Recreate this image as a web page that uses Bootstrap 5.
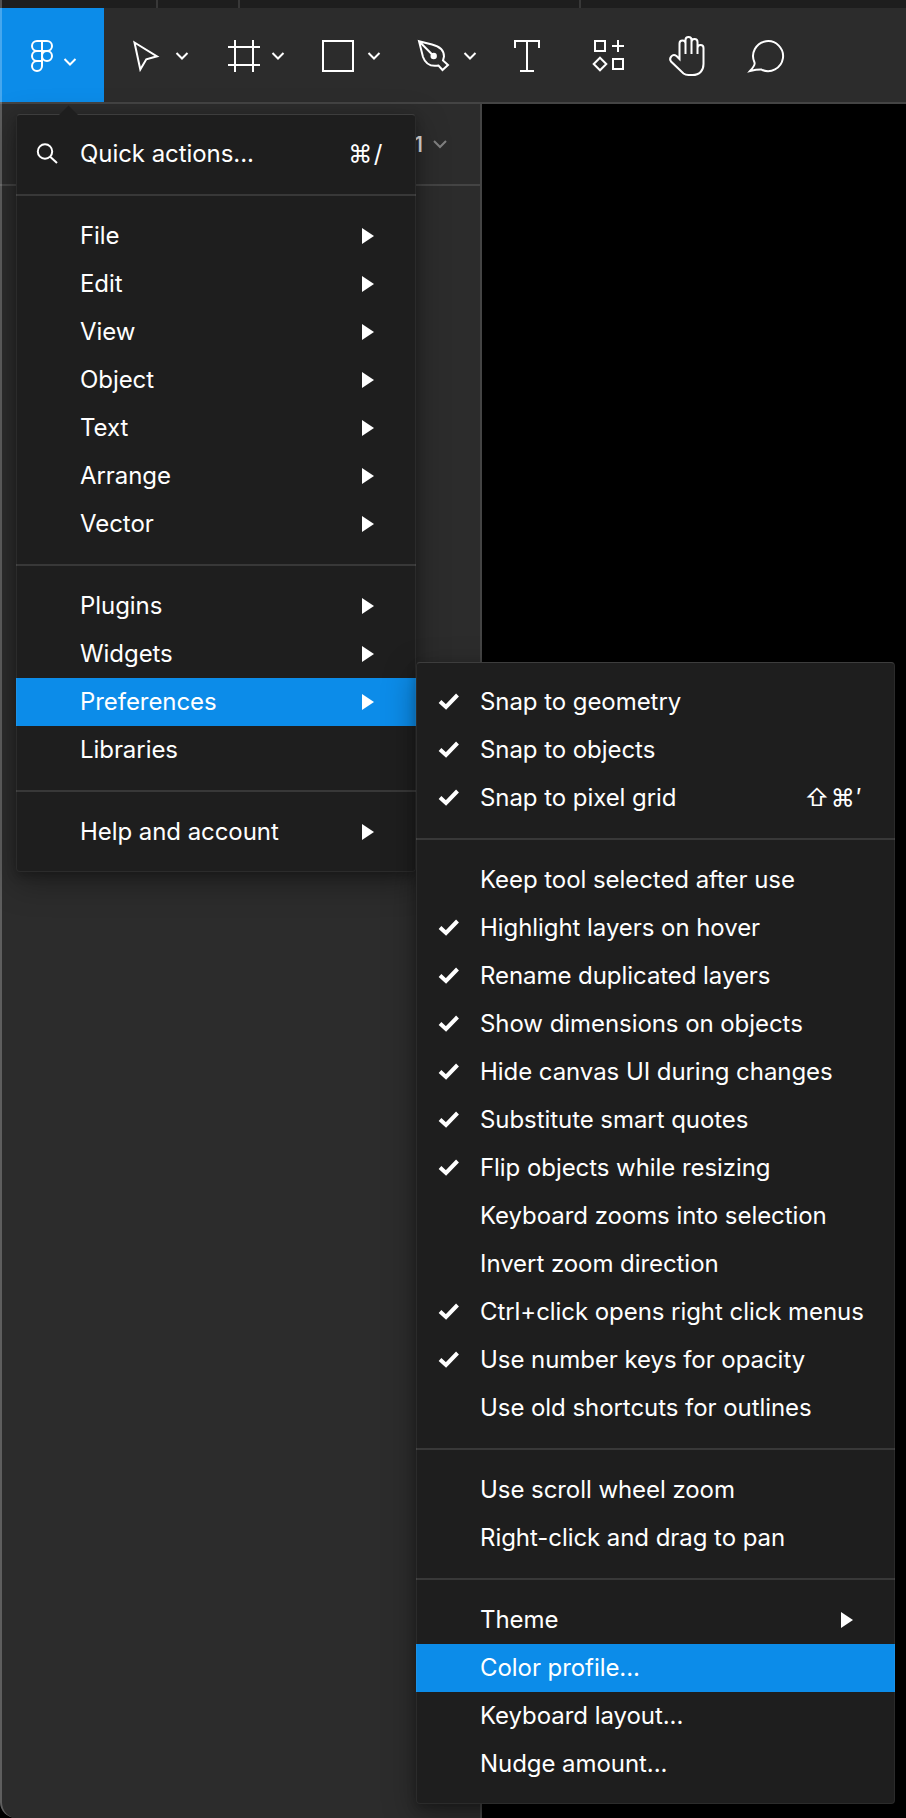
<!DOCTYPE html>
<html lang="en">
<head>
<meta charset="utf-8">
<title>Editor preferences</title>
<link href="https://cdn.jsdelivr.net/npm/bootstrap@5.3.0/dist/css/bootstrap.min.css" rel="stylesheet">
<script src="https://cdn.jsdelivr.net/npm/bootstrap@5.3.0/dist/js/bootstrap.bundle.min.js"></script>
<style>
body { background:#000; color:#fff; font-family:Inter,"Liberation Sans",sans-serif; font-size:24px; font-weight:400; letter-spacing:-.06px; line-height:1.5; }
.app { width:906px; height:1818px; }
.tabstrip { height:8px; background:#1e1e1e; }
.tabstrip span { border-right:2px solid #383838; }
.tab-a { width:158px; } .tab-b { width:82px; } .tab-c { width:341px; }
.toolbar { height:96px; background:#2c2c2c; border-bottom:2px solid #444; }
.toolbar svg, .ico { fill:none; stroke:#fff; stroke-width:2; display:block; flex:none; }
.main-btn { background:#0c8ce9; }
.side { width:482px; background:#2c2c2c; border-right:2px solid #444; border-bottom-left-radius:16px; }
.pages { height:82px; border-bottom:2px solid #444; padding-right:33px; }
.page-no { font-size:22px; font-weight:500; color:#e4e4e4; margin-right:10px; }
.edge { left:0; top:0; width:60px; height:1818px; border-left:2px solid rgba(255,255,255,.24); border-bottom-left-radius:16px; z-index:1; pointer-events:none; }
.panel { background:#1e1e1e; border-radius:4px; padding:16px 0; box-shadow:0 4px 10px rgba(0,0,0,.22),0 10px 32px rgba(0,0,0,.35); z-index:3; }
.panel::after { content:""; position:absolute; inset:0; border:1px solid rgba(255,255,255,.06); border-top-color:rgba(255,255,255,.14); border-radius:4px; pointer-events:none; }
.panel-main { left:16px; top:114px; width:400px; }
.panel-sub { left:416px; top:662px; width:479px; z-index:4; }
.notch { left:58px; top:105px; z-index:5; }
.item { height:48px; padding-right:32px; white-space:nowrap; }
.item.on { background:#0c8ce9; }
.slot { width:64px; flex:none; padding-bottom:2px; }
.lbl, .keys { line-height:47px; padding-bottom:1px; }
.keys { letter-spacing:1.5px; }
.ico-check { margin-left:22px; stroke-width:4; }
.ico-search { margin-left:20px; margin-top:2px; }
.rule { height:2px; margin:16px 0; background:#383838; }
.arrow { width:12px; height:16px; background:#fff; clip-path:polygon(0 0,100% 50%,0 100%); margin-right:10px; }
</style>
</head>
<body>
<div class="app position-relative d-flex flex-column overflow-hidden">
  <div class="tabstrip d-flex flex-shrink-0"><span class="tab-a"></span><span class="tab-b"></span><span class="tab-c"></span></div>
  <nav class="toolbar d-flex flex-shrink-0">
    <svg class="main-btn" width="104" height="94" viewBox="0 8 104 94"><path d="M42 41h-5a5 5 0 0 0 0 10h5zM42 41h5a5 5 0 0 1 0 10h-5M42 51h-5a5 5 0 0 0 0 10h5zM42 61h-5a5 5 0 1 0 5 5z"/><circle cx="47" cy="56" r="5"/><path d="M64.500 59l5.500 5.500 5.500-5.500"/></svg>
    <svg width="96" height="94" viewBox="104 8 96 94"><path d="M134.500 42.500L157 56.300 146.300 59.300 140.300 69.500zM176.500 53l5.500 5.500 5.500-5.500"/></svg>
    <svg width="96" height="94" viewBox="200 8 96 94"><path d="M235 40v32M253 40v32M228 47h32M228 65h32M272.500 53l5.500 5.500 5.500-5.500"/></svg>
    <svg width="96" height="94" viewBox="296 8 96 94"><path d="M323 41h30v30h-30zM368.500 53l5.500 5.500 5.500-5.500"/></svg>
    <svg width="96" height="94" viewBox="392 8 96 94"><path d="M419 41.200L432 44.500C440 46.500 444 51 444 56.500L443 60.500 448 65 442.500 70 438.500 65.500C430 67 425.500 64 423 57ZM419 41.200l14.700 14.800M464.500 53l5.500 5.500 5.500-5.500"/><circle cx="433.700" cy="56" r="2.200" fill="#fff"/></svg>
    <svg width="80" height="94" viewBox="488 8 80 94"><path d="M515 48v-7h24v7M527 41v30M520 71h14"/></svg>
    <svg width="80" height="94" viewBox="568 8 80 94"><path d="M595 41h10v10h-10zM618 40v12M612 46h12M613 59h10v10h-10zM600 57.700l6.300 6.300-6.300 6.300-6.300-6.300z"/></svg>
    <svg width="80" height="94" viewBox="648 8 80 94"><path d="M685.500 54V43.500a3 3 0 0 0-6 0V59l-3-3c-4-3-8 2-5.500 5.500l12.500 12q2 1.500 5 1.500h4c7 0 11-4.500 11-11V48a3 3 0 0 0-6 0v6M685.500 44v-4a3 3 0 0 1 6 0v14M691.500 42a3 3 0 0 1 6 0v12"/></svg>
    <svg width="80" height="94" viewBox="728 8 80 94"><path d="M754.500 62.500A15 15 0 1 1 761.500 69.600Q757 69.500 750 71 755.500 65 754.500 62.500z"/></svg>
  </nav>
  <div class="side flex-grow-1">
    <div class="pages d-flex align-items-center justify-content-end">
      <span class="page-no">1</span>
      <svg class="ico" width="14" height="10" viewBox="433 140 14 10" opacity=".4"><path d="M434 142l6 6 6-6"/></svg>
    </div>
  </div>
  <div class="edge position-absolute"></div>

  <svg class="notch position-absolute" width="22" height="11" viewBox="0 0 22 11"><path d="M0 11L10.500 .5 21 11z" fill="#1e1e1e"/></svg>
  <div class="panel panel-main position-absolute" id="mainMenu"></div>
  <div class="panel panel-sub position-absolute" id="subMenu"></div>
</div>
<script>
const check = '<svg class="ico ico-check" width="22" height="18" viewBox="438 692 22 18"><path d="M440 701.500l6 5.500 11.500-12"/></svg>';
const search = '<svg class="ico ico-search" width="24" height="24" viewBox="36 142 24 24"><circle cx="45" cy="151.500" r="7.200"/><path d="M50.200 156.700l6.800 6.300"/></svg>';
const more = '<span class="arrow d-block ms-auto"></span>';
const keys = t => `<span class="keys ms-auto">${t}</span>`;
// Each entry: [label, leading icon, trailing content, highlighted]; null draws a divider.
const main = [['Quick actions...', search, keys('⌘/')], null,
  ...['File','Edit','View','Object','Text','Arrange','Vector'].map(t => [t, '', more]), null,
  ['Plugins','',more], ['Widgets','',more], ['Preferences','',more,1], ['Libraries'], null,
  ['Help and account','',more]];
const sub = [['Snap to geometry',check], ['Snap to objects',check], ['Snap to pixel grid',check,keys('⇧⌘′')], null,
  ['Keep tool selected after use'], ['Highlight layers on hover',check], ['Rename duplicated layers',check],
  ['Show dimensions on objects',check], ['Hide canvas UI during changes',check], ['Substitute smart quotes',check],
  ['Flip objects while resizing',check], ['Keyboard zooms into selection'], ['Invert zoom direction'],
  ['Ctrl+click opens right click menus',check], ['Use number keys for opacity',check], ['Use old shortcuts for outlines'], null,
  ['Use scroll wheel zoom'], ['Right-click and drag to pan'], null,
  ['Theme','',more], ['Color profile...','','',1], ['Keyboard layout...'], ['Nudge amount...']];
const draw = (id, rows) => document.getElementById(id).innerHTML = rows.map(r => r
  ? `<div class="item d-flex align-items-center${r[3] ? ' on' : ''}"><span class="slot">${r[1] || ''}</span><span class="lbl">${r[0]}</span>${r[2] || ''}</div>`
  : '<div class="rule"></div>').join('');
draw('mainMenu', main); draw('subMenu', sub);
</script>
</body>
</html>
